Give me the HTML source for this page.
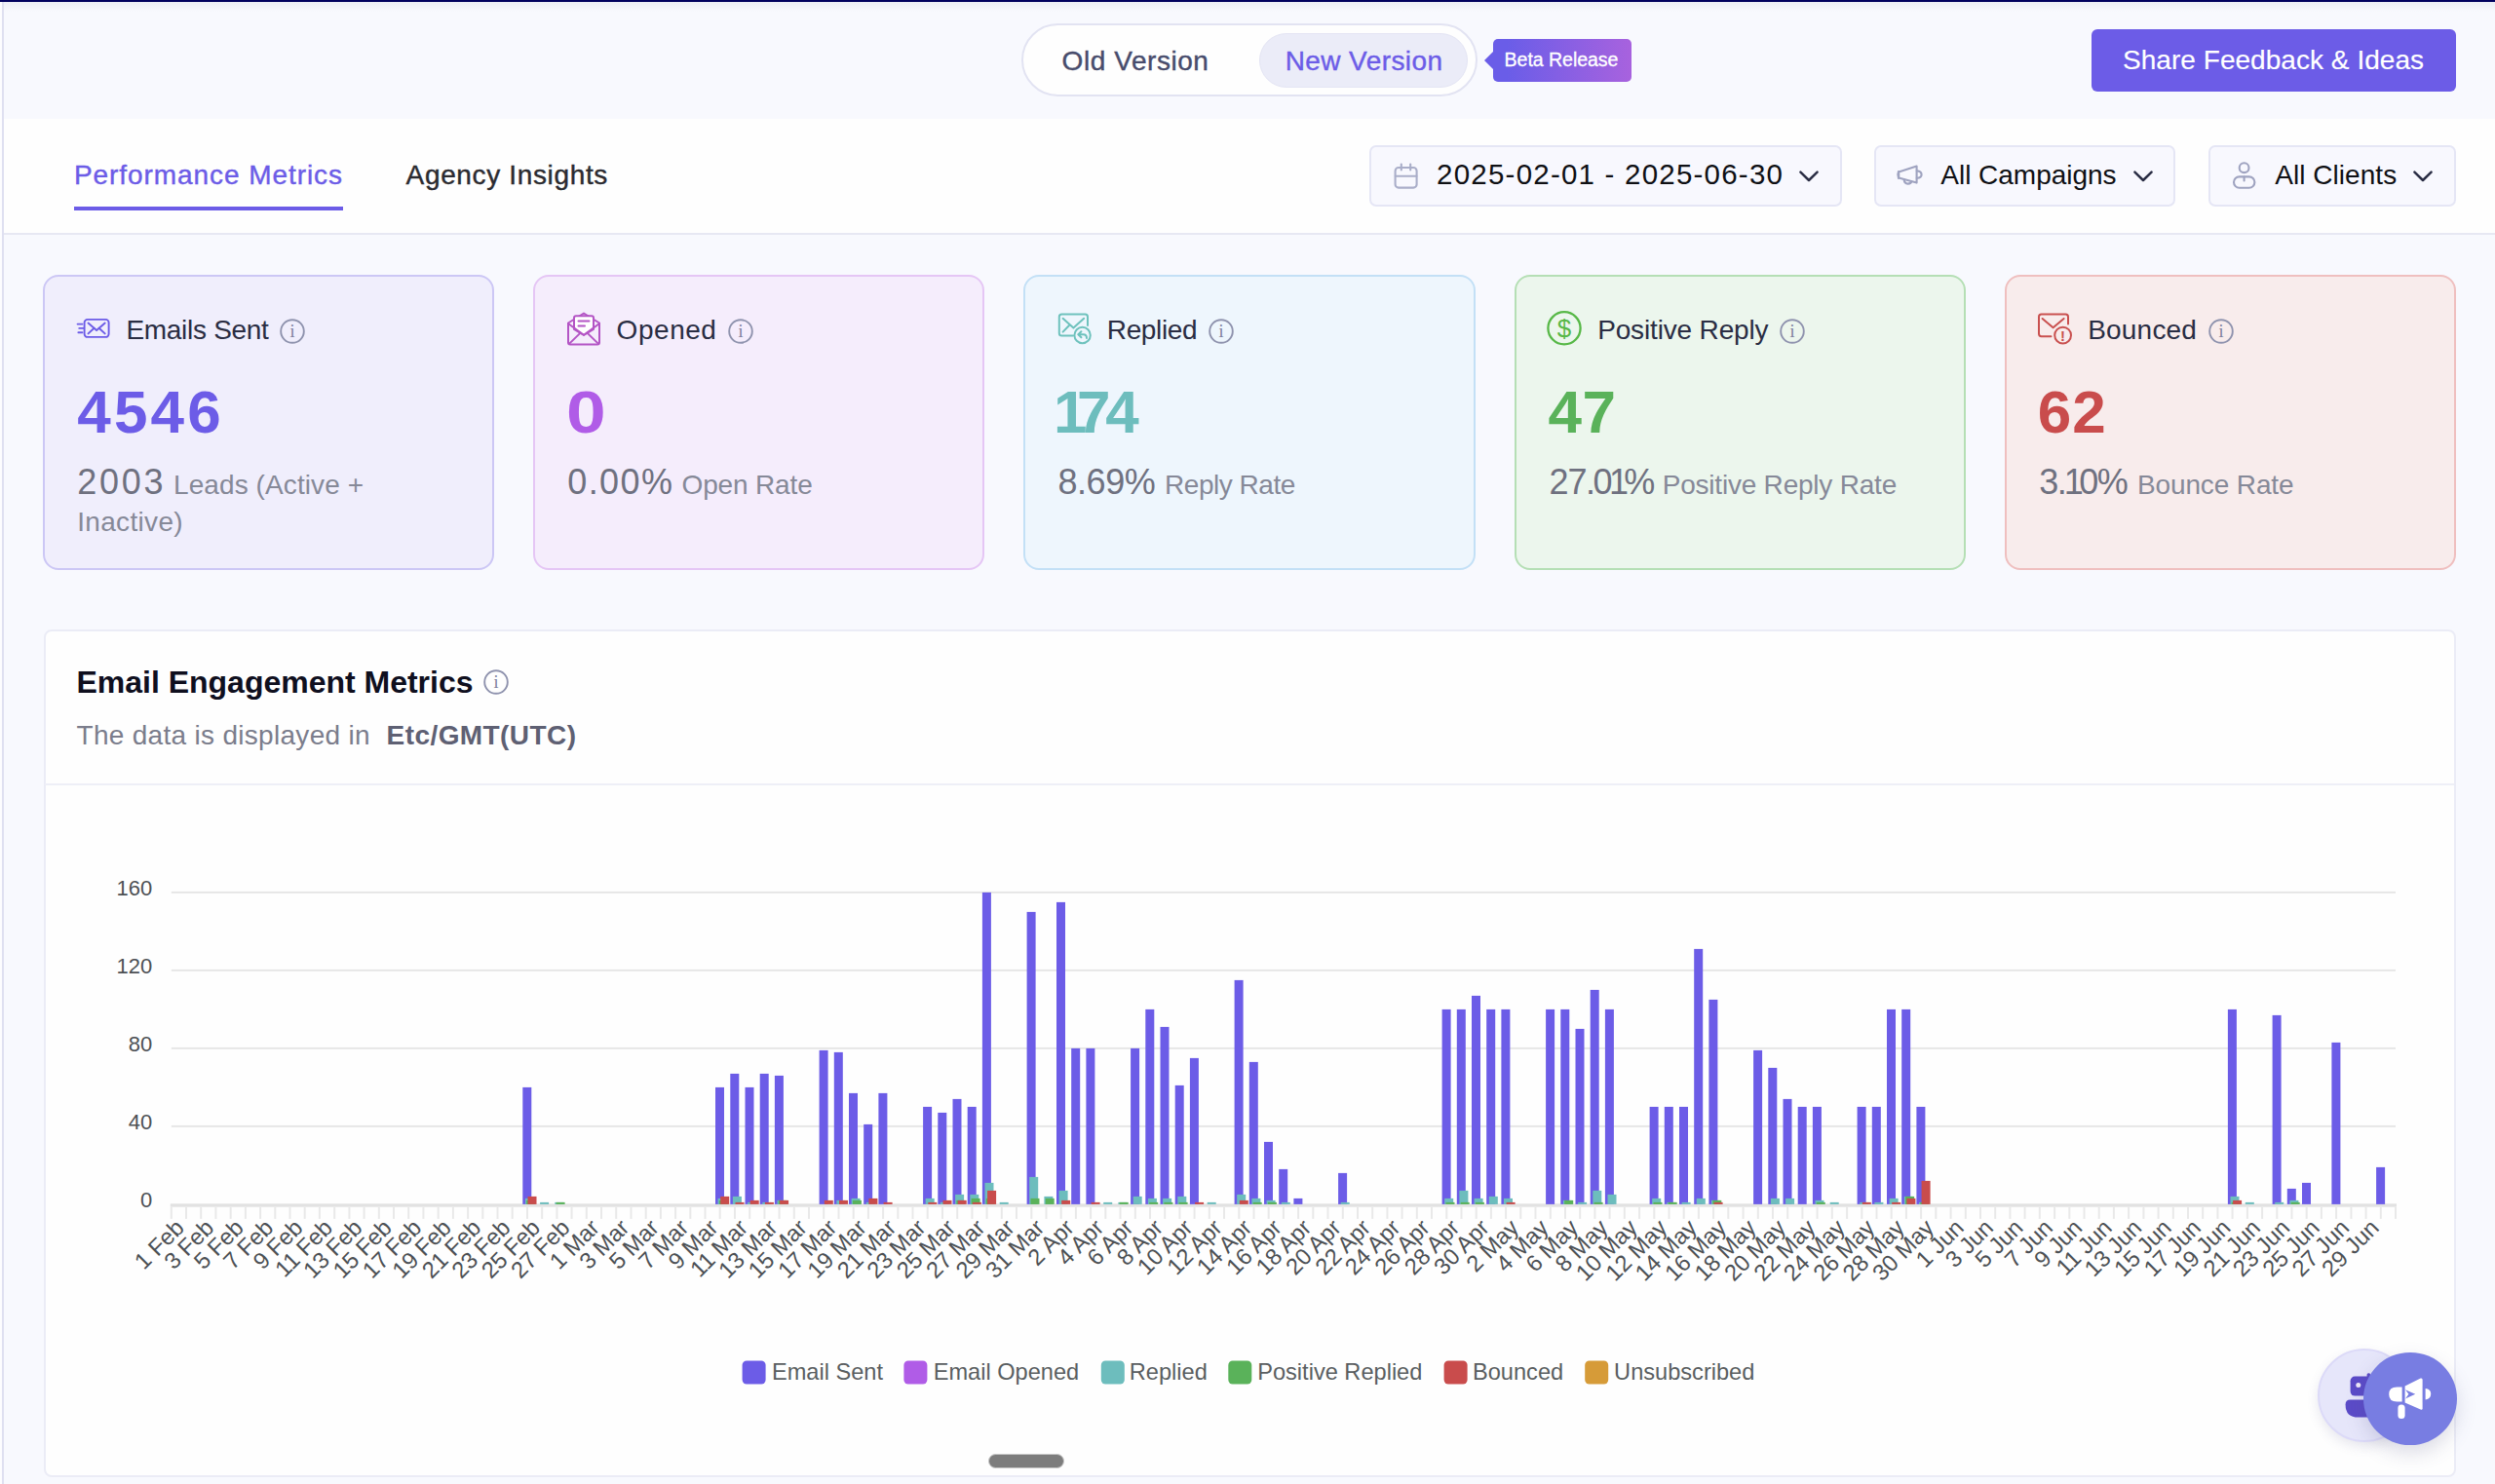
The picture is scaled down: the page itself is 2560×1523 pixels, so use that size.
<!DOCTYPE html>
<html lang="en"><head><meta charset="utf-8"><title>Performance Metrics</title>
<style>
*{box-sizing:border-box}
html,body{margin:0;padding:0}
@media (max-width:1400px){html{zoom:.5}}
body{width:2560px;height:1523px;overflow:hidden;position:relative;background:#f8f9fe;font-family:"Liberation Sans",Arial,sans-serif;color:#2a2d43}
.ab,.t,.card,.box{position:absolute}
.t{white-space:nowrap;line-height:1;display:block}
.topline{position:absolute;left:0;top:0;width:2560px;height:2.4px;background:#00005e}
.topshadow{position:absolute;left:0;top:2px;width:2560px;height:10px;background:linear-gradient(#eceef5,rgba(248,249,254,0))}
.leftedge{position:absolute;left:0;top:2px;width:2.2px;height:1521px;background:#fdfdff}
.leftline{position:absolute;left:2.2px;top:2px;width:1.9px;height:1521px;background:#dfe0f1}
.band{position:absolute;left:4.1px;top:122px;width:2556px;height:119px;background:#fefefe;border-bottom:2px solid #e7e8f3}
.pill{position:absolute;left:1048px;top:24px;width:468px;height:75px;border:2px solid #e2e3f2;border-radius:38px;background:#fefefe}
.pillin{position:absolute;left:1292px;top:33.5px;width:214px;height:56.5px;border-radius:29px;background:#ebecf8;border:1px solid #e4e5f4}
.beta{position:absolute;left:1532px;top:40px;width:142px;height:44px;border-radius:5px;background:linear-gradient(90deg,#6a5de8 10%,#a862de 100%)}
.betaarrow{position:absolute;left:1522.5px;top:52px;width:0;height:0;border-top:10.5px solid transparent;border-bottom:10.5px solid transparent;border-right:10.5px solid #6a5de8}
.share{position:absolute;left:2146px;top:30px;width:374px;height:63.5px;border-radius:6px;background:#6c5ce7}
.tabline{position:absolute;left:76px;top:212px;width:276px;height:4.2px;background:#6c5ce7}
.box{top:149px;height:63px;border:2px solid #e5e6f5;border-radius:7px;background:#f8f8fe}
.card{top:281.6px;width:463.2px;height:303.4px;border:2px solid;border-radius:16px}
.ccard{position:absolute;left:44.5px;top:646px;width:2475.5px;height:870px;background:#fefefe;border:2px solid #ebecf6;border-radius:8px}
.chead{position:absolute;left:46px;top:803.6px;width:2472px;height:2.4px;background:#eeeff7}
.chart{position:absolute;left:0;top:0}
.thumb{position:absolute;left:1013.5px;top:1492px;width:78.5px;height:14.6px;border-radius:8px;background:#7d7d7d;border:1.6px solid #c9c9c9}
.fab1{position:absolute;left:2378px;top:1384px;width:96px;height:96px;border-radius:50%;background:#e6e6fa;border:2px solid #dcdaf8;box-shadow:0 5px 12px rgba(90,90,140,.14)}
.fab2{position:absolute;left:2425px;top:1387.5px;width:95.5px;height:95.5px;border-radius:50%;background:#787de2;box-shadow:0 8px 20px rgba(80,80,130,.20)}
</style></head><body>
<div class="topshadow"></div><div class="band"></div><div class="leftedge"></div><div class="leftline"></div><div class="topline"></div>
<header>
<div class="pill"></div><div class="pillin"></div>
<span class="t" style="left:1089.6px;top:48.7px;font-size:28px;color:#484c6c;font-weight:400;letter-spacing:0.56px;-webkit-text-stroke:0.4px currentColor;">Old Version</span>
<span class="t" style="left:1318.7px;top:48.7px;font-size:28px;color:#6c5ce7;font-weight:400;letter-spacing:0.41px;-webkit-text-stroke:0.4px currentColor;">New Version</span>
<div class="betaarrow"></div><div class="beta"></div>
<span class="t" style="left:1543.6px;top:52.3px;font-size:19.6px;color:#ffffff;font-weight:400;letter-spacing:-0.07px;-webkit-text-stroke:0.3px currentColor;">Beta Release</span>
<div class="share"></div>
<span class="t" style="left:2178.0px;top:48.2px;font-size:28px;color:#ffffff;font-weight:400;letter-spacing:0.04px;-webkit-text-stroke:0.15px currentColor;">Share Feedback &amp; Ideas</span>
</header>
<nav>
<span class="t" style="left:76.0px;top:166.1px;font-size:28px;color:#6c5ce7;font-weight:400;letter-spacing:0.93px;-webkit-text-stroke:0.4px currentColor;">Performance Metrics</span>
<div class="tabline"></div>
<span class="t" style="left:416.6px;top:166.1px;font-size:28px;color:#2b2b30;font-weight:400;letter-spacing:0.65px;-webkit-text-stroke:0.4px currentColor;">Agency Insights</span>
<div class="box" style="left:1405px;width:485px"></div>
<svg class="ab" style="left:1428px;top:165px" width="30" height="32" viewBox="0 0 30 32" fill="none" stroke="#aaaec9" stroke-width="2.1" stroke-linecap="round" stroke-linejoin="round"><rect x="3.6" y="7" width="22" height="20.6" rx="3.4"/><path d="M3.8 15.8 H25.4"/><path d="M9.8 3.6 V9.4"/><path d="M19.2 3.6 V9.4"/></svg>
<span class="t" style="left:1474.1px;top:164.4px;font-size:29.5px;color:#0f1014;font-weight:400;letter-spacing:1.22px;">2025-02-01 - 2025-06-30</span>
<svg class="ab" style="left:1844.2px;top:172.6px" width="24" height="16" viewBox="0 0 24 16" fill="none" stroke="#2b2e45" stroke-width="2.5" stroke-linecap="round" stroke-linejoin="round"><path d="M3.4 3.6 L12 12 L20.6 3.6"/></svg>
<div class="box" style="left:1922.6px;width:309.8px"></div>
<svg class="ab" style="left:1944px;top:166px" width="32" height="28" viewBox="0 0 32 28" fill="none" stroke="#9fa3c0" stroke-width="2.1" stroke-linecap="round" stroke-linejoin="round"><path d="M4.2 10.4 L22.6 4.6 V21.6 L4.2 16.4 Z"/><path d="M22.8 9.4 Q27.6 9.8 27.6 13.2 Q27.6 16.4 22.8 16.8"/><path d="M9.6 18.2 Q10 22.6 13.6 22.6 Q17 22.6 17.2 20.2"/><path d="M4 10 Q2.6 13.4 4 16.8"/></svg>
<span class="t" style="left:1991.3px;top:165.5px;font-size:28px;color:#0f1014;font-weight:400;letter-spacing:-0.02px;">All Campaigns</span>
<svg class="ab" style="left:2187.4px;top:172.6px" width="24" height="16" viewBox="0 0 24 16" fill="none" stroke="#2b2e45" stroke-width="2.5" stroke-linecap="round" stroke-linejoin="round"><path d="M3.4 3.6 L12 12 L20.6 3.6"/></svg>
<div class="box" style="left:2265.6px;width:254.4px"></div>
<svg class="ab" style="left:2288px;top:164px" width="30" height="32" viewBox="0 0 30 32" fill="none" stroke="#9fa3c0" stroke-width="2.1" stroke-linecap="round" stroke-linejoin="round"><circle cx="14.6" cy="8.2" r="4.9"/><rect x="4" y="17.4" width="21.4" height="11.4" rx="5.7"/><path d="M14.6 17.6 V21.4"/></svg>
<span class="t" style="left:2334.2px;top:165.5px;font-size:28px;color:#0f1014;font-weight:400;letter-spacing:0.05px;">All Clients</span>
<svg class="ab" style="left:2474.4px;top:172.6px" width="24" height="16" viewBox="0 0 24 16" fill="none" stroke="#2b2e45" stroke-width="2.5" stroke-linecap="round" stroke-linejoin="round"><path d="M3.4 3.6 L12 12 L20.6 3.6"/></svg>
</nav>
<section>
<div class="card" style="left:44.0px;background:#f0eefc;border-color:#ccc7f5"></div>
<svg class="ab" style="left:76px;top:322px" width="40" height="30" viewBox="0 0 40 30" fill="none" stroke="#6c5ce7" stroke-width="1.9" stroke-linecap="round" stroke-linejoin="round"><rect x="10.6" y="5.9" width="25" height="18" rx="3.2"/><path d="M14.5 9.5 L23.1 17 L31.7 9.5"/><path d="M14.5 20.4 L20.6 14.8"/><path d="M31.7 20.4 L25.6 14.8"/><path d="M3.6 10.6 H8.4"/><path d="M5.3 14.9 H10"/><path d="M4.4 19.2 H8.4"/></svg>
<span class="t" style="left:129.4px;top:325.4px;font-size:28px;color:#2a2d43;font-weight:400;letter-spacing:-0.29px;">Emails Sent</span>
<svg class="ab" style="left:286.2px;top:326.0px" width="28" height="28" viewBox="0 0 28 28"><circle cx="14" cy="14" r="11.8" fill="none" stroke="#8f93ae" stroke-width="1.9"/><text x="14" y="20.2" text-anchor="middle" font-family="'Liberation Serif', serif" font-size="18" fill="#7d819c">i</text></svg>
<span class="t" style="left:79.2px;top:391.9px;font-size:62px;color:#6c5ce7;font-weight:700;letter-spacing:3.22px;">4546</span>
<span class="t" style="left:79.2px;top:477.1px;font-size:36px;color:#6f7180;font-weight:400;letter-spacing:2.77px;">2003</span>
<span class="t" style="left:178.0px;top:483.9px;font-size:28px;color:#868998;font-weight:400;letter-spacing:0.09px;">Leads (Active +</span>
<span class="t" style="left:79.2px;top:522.3px;font-size:28px;color:#868998;font-weight:400;letter-spacing:0.33px;">Inactive)</span>
<div class="card" style="left:547.2px;background:#f5edfc;border-color:#e5c6f5"></div>
<svg class="ab" style="left:578px;top:316px" width="42" height="42" viewBox="0 0 42 42" fill="none" stroke="#b455c5" stroke-width="2.0" stroke-linecap="round" stroke-linejoin="round"><path d="M5 15.5 L21 5.5 L37 15.5 V35.5 Q37 37.4 35 37.4 H7 Q5 37.4 5 35.5 Z"/><path d="M11 22 V10.2 Q11 8.2 13 8.2 H29 Q31 8.2 31 10.2 V22 L21 28 Z" fill="#fff"/><path d="M15.5 13.5 H26.5"/><path d="M15.5 18.5 H22"/><path d="M5.6 16.5 L21 27.8 L36.4 16.5"/><path d="M6.2 36.6 L17.6 25.6"/><path d="M35.8 36.6 L24.4 25.6"/></svg>
<span class="t" style="left:632.6px;top:325.4px;font-size:28px;color:#2a2d43;font-weight:400;letter-spacing:0.54px;">Opened</span>
<svg class="ab" style="left:745.8px;top:326.0px" width="28" height="28" viewBox="0 0 28 28"><circle cx="14" cy="14" r="11.8" fill="none" stroke="#8f93ae" stroke-width="1.9"/><text x="14" y="20.2" text-anchor="middle" font-family="'Liberation Serif', serif" font-size="18" fill="#7d819c">i</text></svg>
<span class="t" style="left:580.6px;top:391.9px;font-size:62px;color:#b05ce7;font-weight:700;transform:scaleX(1.18);transform-origin:0 0;">0</span>
<span class="t" style="left:582.3px;top:477.1px;font-size:36px;color:#6f7180;font-weight:400;letter-spacing:1.38px;">0.00%</span>
<span class="t" style="left:699.5px;top:483.9px;font-size:28px;color:#868998;font-weight:400;letter-spacing:-0.15px;">Open Rate</span>
<div class="card" style="left:1050.4px;background:#eef6fd;border-color:#c3e0f6"></div>
<svg class="ab" style="left:1082px;top:318px" width="44" height="40" viewBox="0 0 44 40" fill="none" stroke="#6ec2bd" stroke-width="2.0" stroke-linecap="round" stroke-linejoin="round"><path d="M19 26.6 H7.4 Q4.8 26.6 4.8 24 V7.2 Q4.8 4.6 7.4 4.6 H31.4 Q34 4.6 34 7.2 V16"/><path d="M8.6 8.8 L19.4 18.6 L30.2 8.8"/><path d="M8.6 22.6 L15 16"/><circle cx="28.6" cy="26" r="8.2" fill="#eef6fd"/><path d="M24.6 25.2 H29.6 Q33 25.2 33 29"/><path d="M27.4 22.2 L24.4 25.2 L27.4 28.2"/></svg>
<span class="t" style="left:1135.8px;top:325.4px;font-size:28px;color:#2a2d43;font-weight:400;letter-spacing:-0.37px;">Replied</span>
<svg class="ab" style="left:1239.3px;top:326.0px" width="28" height="28" viewBox="0 0 28 28"><circle cx="14" cy="14" r="11.8" fill="none" stroke="#8f93ae" stroke-width="1.9"/><text x="14" y="20.2" text-anchor="middle" font-family="'Liberation Serif', serif" font-size="18" fill="#7d819c">i</text></svg>
<span class="t" style="left:1080.9px;top:391.9px;font-size:62px;color:#6dbdbd;font-weight:700"><span style="letter-spacing:-10.5px">1</span><span style="letter-spacing:-5px">7</span>4</span>
<span class="t" style="left:1085.4px;top:477.1px;font-size:36px;color:#6f7180;font-weight:400;letter-spacing:-0.40px;">8.69%</span>
<span class="t" style="left:1195.1px;top:483.9px;font-size:28px;color:#868998;font-weight:400;letter-spacing:-0.48px;">Reply Rate</span>
<div class="card" style="left:1553.6px;background:#ecf6ed;border-color:#b5dfb5"></div>
<svg class="ab" style="left:1585px;top:317px" width="40" height="40" viewBox="0 0 40 40" fill="none" stroke="#57b847" stroke-width="2.3"><circle cx="20" cy="19.8" r="16.6"/><text x="20" y="29" text-anchor="middle" font-family="'Liberation Sans', sans-serif" font-size="26" fill="#57b847" stroke="none">$</text></svg>
<span class="t" style="left:1639.2px;top:325.4px;font-size:28px;color:#2a2d43;font-weight:400;letter-spacing:-0.16px;">Positive Reply</span>
<svg class="ab" style="left:1825.0px;top:326.0px" width="28" height="28" viewBox="0 0 28 28"><circle cx="14" cy="14" r="11.8" fill="none" stroke="#8f93ae" stroke-width="1.9"/><text x="14" y="20.2" text-anchor="middle" font-family="'Liberation Serif', serif" font-size="18" fill="#7d819c">i</text></svg>
<span class="t" style="left:1588.6px;top:391.9px;font-size:62px;color:#5ab25a;font-weight:700;letter-spacing:0.47px;">47</span>
<span class="t" style="left:1589.4px;top:477.1px;font-size:36px;color:#6f7180;font-weight:400"><span style="letter-spacing:-1px">2</span><span style="letter-spacing:-1.5px">7</span><span style="letter-spacing:-2.5px">.</span><span style="letter-spacing:-3.4px">0</span><span style="letter-spacing:-4.8px">1</span>%</span>
<span class="t" style="left:1705.7px;top:483.9px;font-size:28px;color:#868998;font-weight:400;letter-spacing:-0.21px;">Positive Reply Rate</span>
<div class="card" style="left:2056.8px;background:#f8ecec;border-color:#efbfbf"></div>
<svg class="ab" style="left:2087px;top:318px" width="44" height="40" viewBox="0 0 44 40" fill="none" stroke="#c9504f" stroke-width="2.0" stroke-linecap="round" stroke-linejoin="round"><path d="M17.5 27.2 H7.6 Q5 27.2 5 24.6 V7.2 Q5 4.6 7.6 4.6 H32.4 Q35 4.6 35 7.2 V14.4"/><path d="M8.6 9 L19.6 18.2 L30.6 9"/><circle cx="29.6" cy="26.1" r="8.4" fill="#f8ecec"/><text x="29.6" y="31.6" text-anchor="middle" font-family="'Liberation Sans', sans-serif" font-size="15" font-weight="700" fill="#c9504f" stroke="none">!</text></svg>
<span class="t" style="left:2142.2px;top:325.4px;font-size:28px;color:#2a2d43;font-weight:400;letter-spacing:0.20px;">Bounced</span>
<svg class="ab" style="left:2265.2px;top:326.0px" width="28" height="28" viewBox="0 0 28 28"><circle cx="14" cy="14" r="11.8" fill="none" stroke="#8f93ae" stroke-width="1.9"/><text x="14" y="20.2" text-anchor="middle" font-family="'Liberation Serif', serif" font-size="18" fill="#7d819c">i</text></svg>
<span class="t" style="left:2090.8px;top:391.9px;font-size:62px;color:#c94c4c;font-weight:700;letter-spacing:0.97px;">62</span>
<span class="t" style="left:2092.3px;top:477.1px;font-size:36px;color:#6f7180;font-weight:400"><span style="letter-spacing:-1.5px">3</span><span style="letter-spacing:-3px">.</span><span style="letter-spacing:-4.6px">1</span><span style="letter-spacing:-1.6px">0</span>%</span>
<span class="t" style="left:2193.0px;top:483.9px;font-size:28px;color:#868998;font-weight:400;letter-spacing:-0.13px;">Bounce Rate</span>
</section>
<section>
<div class="ccard"></div><div class="chead"></div>
<span class="t" style="left:78.5px;top:684.3px;font-size:32px;color:#0f0f1e;font-weight:700;letter-spacing:-0.01px;">Email Engagement Metrics</span>
<svg class="ab" style="left:494.7px;top:686.2px" width="28" height="28" viewBox="0 0 28 28"><circle cx="14" cy="14" r="11.8" fill="none" stroke="#8f93ae" stroke-width="1.9"/><text x="14" y="20.2" text-anchor="middle" font-family="'Liberation Serif', serif" font-size="18" fill="#7d819c">i</text></svg>
<span class="t" style="left:78.5px;top:741.1px;font-size:28px;color:#7b7d8c;font-weight:400;letter-spacing:0.30px;">The data is displayed in</span>
<span class="t" style="left:396.6px;top:741.1px;font-size:28px;color:#5e6073;font-weight:700;letter-spacing:0.42px;">Etc/GMT(UTC)</span>
<svg class="chart" width="2560" height="1523" viewBox="0 0 2560 1523" font-family="'Liberation Sans', Arial, sans-serif" font-size="22" fill="#4d5155">
<rect x="175.8" y="1154.9" width="2282.2" height="1.9" fill="#e5e5e5"/>
<rect x="175.8" y="1074.9" width="2282.2" height="1.9" fill="#e5e5e5"/>
<rect x="175.8" y="994.9" width="2282.2" height="1.9" fill="#e5e5e5"/>
<rect x="175.8" y="914.9" width="2282.2" height="1.9" fill="#e5e5e5"/>
<rect x="174.8" y="1235.3" width="2284.2" height="3.4" fill="#e2e2e2"/>
<rect x="174.8" y="1238.9" width="2" height="12" fill="#e9e9e9"/>
<rect x="190.0" y="1238.9" width="2" height="12" fill="#e9e9e9"/>
<rect x="205.2" y="1238.9" width="2" height="12" fill="#e9e9e9"/>
<rect x="220.4" y="1238.9" width="2" height="12" fill="#e9e9e9"/>
<rect x="235.7" y="1238.9" width="2" height="12" fill="#e9e9e9"/>
<rect x="250.9" y="1238.9" width="2" height="12" fill="#e9e9e9"/>
<rect x="266.1" y="1238.9" width="2" height="12" fill="#e9e9e9"/>
<rect x="281.3" y="1238.9" width="2" height="12" fill="#e9e9e9"/>
<rect x="296.5" y="1238.9" width="2" height="12" fill="#e9e9e9"/>
<rect x="311.7" y="1238.9" width="2" height="12" fill="#e9e9e9"/>
<rect x="326.9" y="1238.9" width="2" height="12" fill="#e9e9e9"/>
<rect x="342.2" y="1238.9" width="2" height="12" fill="#e9e9e9"/>
<rect x="357.4" y="1238.9" width="2" height="12" fill="#e9e9e9"/>
<rect x="372.6" y="1238.9" width="2" height="12" fill="#e9e9e9"/>
<rect x="387.8" y="1238.9" width="2" height="12" fill="#e9e9e9"/>
<rect x="403.0" y="1238.9" width="2" height="12" fill="#e9e9e9"/>
<rect x="418.2" y="1238.9" width="2" height="12" fill="#e9e9e9"/>
<rect x="433.4" y="1238.9" width="2" height="12" fill="#e9e9e9"/>
<rect x="448.7" y="1238.9" width="2" height="12" fill="#e9e9e9"/>
<rect x="463.9" y="1238.9" width="2" height="12" fill="#e9e9e9"/>
<rect x="479.1" y="1238.9" width="2" height="12" fill="#e9e9e9"/>
<rect x="494.3" y="1238.9" width="2" height="12" fill="#e9e9e9"/>
<rect x="509.5" y="1238.9" width="2" height="12" fill="#e9e9e9"/>
<rect x="524.7" y="1238.9" width="2" height="12" fill="#e9e9e9"/>
<rect x="540.0" y="1238.9" width="2" height="12" fill="#e9e9e9"/>
<rect x="555.2" y="1238.9" width="2" height="12" fill="#e9e9e9"/>
<rect x="570.4" y="1238.9" width="2" height="12" fill="#e9e9e9"/>
<rect x="585.6" y="1238.9" width="2" height="12" fill="#e9e9e9"/>
<rect x="600.8" y="1238.9" width="2" height="12" fill="#e9e9e9"/>
<rect x="616.0" y="1238.9" width="2" height="12" fill="#e9e9e9"/>
<rect x="631.2" y="1238.9" width="2" height="12" fill="#e9e9e9"/>
<rect x="646.5" y="1238.9" width="2" height="12" fill="#e9e9e9"/>
<rect x="661.7" y="1238.9" width="2" height="12" fill="#e9e9e9"/>
<rect x="676.9" y="1238.9" width="2" height="12" fill="#e9e9e9"/>
<rect x="692.1" y="1238.9" width="2" height="12" fill="#e9e9e9"/>
<rect x="707.3" y="1238.9" width="2" height="12" fill="#e9e9e9"/>
<rect x="722.5" y="1238.9" width="2" height="12" fill="#e9e9e9"/>
<rect x="737.7" y="1238.9" width="2" height="12" fill="#e9e9e9"/>
<rect x="753.0" y="1238.9" width="2" height="12" fill="#e9e9e9"/>
<rect x="768.2" y="1238.9" width="2" height="12" fill="#e9e9e9"/>
<rect x="783.4" y="1238.9" width="2" height="12" fill="#e9e9e9"/>
<rect x="798.6" y="1238.9" width="2" height="12" fill="#e9e9e9"/>
<rect x="813.8" y="1238.9" width="2" height="12" fill="#e9e9e9"/>
<rect x="829.0" y="1238.9" width="2" height="12" fill="#e9e9e9"/>
<rect x="844.2" y="1238.9" width="2" height="12" fill="#e9e9e9"/>
<rect x="859.5" y="1238.9" width="2" height="12" fill="#e9e9e9"/>
<rect x="874.7" y="1238.9" width="2" height="12" fill="#e9e9e9"/>
<rect x="889.9" y="1238.9" width="2" height="12" fill="#e9e9e9"/>
<rect x="905.1" y="1238.9" width="2" height="12" fill="#e9e9e9"/>
<rect x="920.3" y="1238.9" width="2" height="12" fill="#e9e9e9"/>
<rect x="935.5" y="1238.9" width="2" height="12" fill="#e9e9e9"/>
<rect x="950.7" y="1238.9" width="2" height="12" fill="#e9e9e9"/>
<rect x="966.0" y="1238.9" width="2" height="12" fill="#e9e9e9"/>
<rect x="981.2" y="1238.9" width="2" height="12" fill="#e9e9e9"/>
<rect x="996.4" y="1238.9" width="2" height="12" fill="#e9e9e9"/>
<rect x="1011.6" y="1238.9" width="2" height="12" fill="#e9e9e9"/>
<rect x="1026.8" y="1238.9" width="2" height="12" fill="#e9e9e9"/>
<rect x="1042.0" y="1238.9" width="2" height="12" fill="#e9e9e9"/>
<rect x="1057.3" y="1238.9" width="2" height="12" fill="#e9e9e9"/>
<rect x="1072.5" y="1238.9" width="2" height="12" fill="#e9e9e9"/>
<rect x="1087.7" y="1238.9" width="2" height="12" fill="#e9e9e9"/>
<rect x="1102.9" y="1238.9" width="2" height="12" fill="#e9e9e9"/>
<rect x="1118.1" y="1238.9" width="2" height="12" fill="#e9e9e9"/>
<rect x="1133.3" y="1238.9" width="2" height="12" fill="#e9e9e9"/>
<rect x="1148.5" y="1238.9" width="2" height="12" fill="#e9e9e9"/>
<rect x="1163.8" y="1238.9" width="2" height="12" fill="#e9e9e9"/>
<rect x="1179.0" y="1238.9" width="2" height="12" fill="#e9e9e9"/>
<rect x="1194.2" y="1238.9" width="2" height="12" fill="#e9e9e9"/>
<rect x="1209.4" y="1238.9" width="2" height="12" fill="#e9e9e9"/>
<rect x="1224.6" y="1238.9" width="2" height="12" fill="#e9e9e9"/>
<rect x="1239.8" y="1238.9" width="2" height="12" fill="#e9e9e9"/>
<rect x="1255.0" y="1238.9" width="2" height="12" fill="#e9e9e9"/>
<rect x="1270.3" y="1238.9" width="2" height="12" fill="#e9e9e9"/>
<rect x="1285.5" y="1238.9" width="2" height="12" fill="#e9e9e9"/>
<rect x="1300.7" y="1238.9" width="2" height="12" fill="#e9e9e9"/>
<rect x="1315.9" y="1238.9" width="2" height="12" fill="#e9e9e9"/>
<rect x="1331.1" y="1238.9" width="2" height="12" fill="#e9e9e9"/>
<rect x="1346.3" y="1238.9" width="2" height="12" fill="#e9e9e9"/>
<rect x="1361.5" y="1238.9" width="2" height="12" fill="#e9e9e9"/>
<rect x="1376.8" y="1238.9" width="2" height="12" fill="#e9e9e9"/>
<rect x="1392.0" y="1238.9" width="2" height="12" fill="#e9e9e9"/>
<rect x="1407.2" y="1238.9" width="2" height="12" fill="#e9e9e9"/>
<rect x="1422.4" y="1238.9" width="2" height="12" fill="#e9e9e9"/>
<rect x="1437.6" y="1238.9" width="2" height="12" fill="#e9e9e9"/>
<rect x="1452.8" y="1238.9" width="2" height="12" fill="#e9e9e9"/>
<rect x="1468.0" y="1238.9" width="2" height="12" fill="#e9e9e9"/>
<rect x="1483.3" y="1238.9" width="2" height="12" fill="#e9e9e9"/>
<rect x="1498.5" y="1238.9" width="2" height="12" fill="#e9e9e9"/>
<rect x="1513.7" y="1238.9" width="2" height="12" fill="#e9e9e9"/>
<rect x="1528.9" y="1238.9" width="2" height="12" fill="#e9e9e9"/>
<rect x="1544.1" y="1238.9" width="2" height="12" fill="#e9e9e9"/>
<rect x="1559.3" y="1238.9" width="2" height="12" fill="#e9e9e9"/>
<rect x="1574.5" y="1238.9" width="2" height="12" fill="#e9e9e9"/>
<rect x="1589.8" y="1238.9" width="2" height="12" fill="#e9e9e9"/>
<rect x="1605.0" y="1238.9" width="2" height="12" fill="#e9e9e9"/>
<rect x="1620.2" y="1238.9" width="2" height="12" fill="#e9e9e9"/>
<rect x="1635.4" y="1238.9" width="2" height="12" fill="#e9e9e9"/>
<rect x="1650.6" y="1238.9" width="2" height="12" fill="#e9e9e9"/>
<rect x="1665.8" y="1238.9" width="2" height="12" fill="#e9e9e9"/>
<rect x="1681.1" y="1238.9" width="2" height="12" fill="#e9e9e9"/>
<rect x="1696.3" y="1238.9" width="2" height="12" fill="#e9e9e9"/>
<rect x="1711.5" y="1238.9" width="2" height="12" fill="#e9e9e9"/>
<rect x="1726.7" y="1238.9" width="2" height="12" fill="#e9e9e9"/>
<rect x="1741.9" y="1238.9" width="2" height="12" fill="#e9e9e9"/>
<rect x="1757.1" y="1238.9" width="2" height="12" fill="#e9e9e9"/>
<rect x="1772.3" y="1238.9" width="2" height="12" fill="#e9e9e9"/>
<rect x="1787.6" y="1238.9" width="2" height="12" fill="#e9e9e9"/>
<rect x="1802.8" y="1238.9" width="2" height="12" fill="#e9e9e9"/>
<rect x="1818.0" y="1238.9" width="2" height="12" fill="#e9e9e9"/>
<rect x="1833.2" y="1238.9" width="2" height="12" fill="#e9e9e9"/>
<rect x="1848.4" y="1238.9" width="2" height="12" fill="#e9e9e9"/>
<rect x="1863.6" y="1238.9" width="2" height="12" fill="#e9e9e9"/>
<rect x="1878.8" y="1238.9" width="2" height="12" fill="#e9e9e9"/>
<rect x="1894.1" y="1238.9" width="2" height="12" fill="#e9e9e9"/>
<rect x="1909.3" y="1238.9" width="2" height="12" fill="#e9e9e9"/>
<rect x="1924.5" y="1238.9" width="2" height="12" fill="#e9e9e9"/>
<rect x="1939.7" y="1238.9" width="2" height="12" fill="#e9e9e9"/>
<rect x="1954.9" y="1238.9" width="2" height="12" fill="#e9e9e9"/>
<rect x="1970.1" y="1238.9" width="2" height="12" fill="#e9e9e9"/>
<rect x="1985.3" y="1238.9" width="2" height="12" fill="#e9e9e9"/>
<rect x="2000.6" y="1238.9" width="2" height="12" fill="#e9e9e9"/>
<rect x="2015.8" y="1238.9" width="2" height="12" fill="#e9e9e9"/>
<rect x="2031.0" y="1238.9" width="2" height="12" fill="#e9e9e9"/>
<rect x="2046.2" y="1238.9" width="2" height="12" fill="#e9e9e9"/>
<rect x="2061.4" y="1238.9" width="2" height="12" fill="#e9e9e9"/>
<rect x="2076.6" y="1238.9" width="2" height="12" fill="#e9e9e9"/>
<rect x="2091.8" y="1238.9" width="2" height="12" fill="#e9e9e9"/>
<rect x="2107.1" y="1238.9" width="2" height="12" fill="#e9e9e9"/>
<rect x="2122.3" y="1238.9" width="2" height="12" fill="#e9e9e9"/>
<rect x="2137.5" y="1238.9" width="2" height="12" fill="#e9e9e9"/>
<rect x="2152.7" y="1238.9" width="2" height="12" fill="#e9e9e9"/>
<rect x="2167.9" y="1238.9" width="2" height="12" fill="#e9e9e9"/>
<rect x="2183.1" y="1238.9" width="2" height="12" fill="#e9e9e9"/>
<rect x="2198.4" y="1238.9" width="2" height="12" fill="#e9e9e9"/>
<rect x="2213.6" y="1238.9" width="2" height="12" fill="#e9e9e9"/>
<rect x="2228.8" y="1238.9" width="2" height="12" fill="#e9e9e9"/>
<rect x="2244.0" y="1238.9" width="2" height="12" fill="#e9e9e9"/>
<rect x="2259.2" y="1238.9" width="2" height="12" fill="#e9e9e9"/>
<rect x="2274.4" y="1238.9" width="2" height="12" fill="#e9e9e9"/>
<rect x="2289.6" y="1238.9" width="2" height="12" fill="#e9e9e9"/>
<rect x="2304.9" y="1238.9" width="2" height="12" fill="#e9e9e9"/>
<rect x="2320.1" y="1238.9" width="2" height="12" fill="#e9e9e9"/>
<rect x="2335.3" y="1238.9" width="2" height="12" fill="#e9e9e9"/>
<rect x="2350.5" y="1238.9" width="2" height="12" fill="#e9e9e9"/>
<rect x="2365.7" y="1238.9" width="2" height="12" fill="#e9e9e9"/>
<rect x="2380.9" y="1238.9" width="2" height="12" fill="#e9e9e9"/>
<rect x="2396.1" y="1238.9" width="2" height="12" fill="#e9e9e9"/>
<rect x="2411.4" y="1238.9" width="2" height="12" fill="#e9e9e9"/>
<rect x="2426.6" y="1238.9" width="2" height="12" fill="#e9e9e9"/>
<rect x="2441.8" y="1238.9" width="2" height="12" fill="#e9e9e9"/>
<rect x="2457.0" y="1238.9" width="2" height="12" fill="#e9e9e9"/>
<text x="156.2" y="1239.1" text-anchor="end">0</text>
<text x="156.2" y="1159.1" text-anchor="end">40</text>
<text x="156.2" y="1079.1" text-anchor="end">80</text>
<text x="156.2" y="999.1" text-anchor="end">120</text>
<text x="156.2" y="919.1" text-anchor="end">160</text>
<g fill="#6c5ce7">
<rect x="536.3" y="1115.9" width="9.0" height="120.0"/>
<rect x="734.0" y="1115.9" width="9.0" height="120.0"/>
<rect x="749.3" y="1101.9" width="9.0" height="134.0"/>
<rect x="764.5" y="1115.9" width="9.0" height="120.0"/>
<rect x="779.7" y="1101.9" width="9.0" height="134.0"/>
<rect x="794.9" y="1103.9" width="9.0" height="132.0"/>
<rect x="840.6" y="1077.9" width="9.0" height="158.0"/>
<rect x="855.8" y="1079.9" width="9.0" height="156.0"/>
<rect x="871.0" y="1121.9" width="9.0" height="114.0"/>
<rect x="886.2" y="1153.9" width="9.0" height="82.0"/>
<rect x="901.4" y="1121.9" width="9.0" height="114.0"/>
<rect x="947.1" y="1135.9" width="9.0" height="100.0"/>
<rect x="962.3" y="1141.9" width="9.0" height="94.0"/>
<rect x="977.5" y="1127.9" width="9.0" height="108.0"/>
<rect x="992.7" y="1135.9" width="9.0" height="100.0"/>
<rect x="1007.9" y="915.9" width="9.0" height="320.0"/>
<rect x="1053.6" y="935.9" width="9.0" height="300.0"/>
<rect x="1084.0" y="925.9" width="9.0" height="310.0"/>
<rect x="1099.2" y="1075.9" width="9.0" height="160.0"/>
<rect x="1114.4" y="1075.9" width="9.0" height="160.0"/>
<rect x="1160.1" y="1075.9" width="9.0" height="160.0"/>
<rect x="1175.3" y="1035.9" width="9.0" height="200.0"/>
<rect x="1190.5" y="1053.9" width="9.0" height="182.0"/>
<rect x="1205.7" y="1113.9" width="9.0" height="122.0"/>
<rect x="1220.9" y="1085.9" width="9.0" height="150.0"/>
<rect x="1266.6" y="1005.9" width="9.0" height="230.0"/>
<rect x="1281.8" y="1089.9" width="9.0" height="146.0"/>
<rect x="1297.0" y="1171.9" width="9.0" height="64.0"/>
<rect x="1312.2" y="1199.9" width="9.0" height="36.0"/>
<rect x="1327.4" y="1229.9" width="9.0" height="6.0"/>
<rect x="1373.1" y="1203.9" width="9.0" height="32.0"/>
<rect x="1479.6" y="1035.9" width="9.0" height="200.0"/>
<rect x="1494.8" y="1035.9" width="9.0" height="200.0"/>
<rect x="1510.0" y="1021.9" width="9.0" height="214.0"/>
<rect x="1525.2" y="1035.9" width="9.0" height="200.0"/>
<rect x="1540.4" y="1035.9" width="9.0" height="200.0"/>
<rect x="1586.1" y="1035.9" width="9.0" height="200.0"/>
<rect x="1601.3" y="1035.9" width="9.0" height="200.0"/>
<rect x="1616.5" y="1055.9" width="9.0" height="180.0"/>
<rect x="1631.7" y="1015.9" width="9.0" height="220.0"/>
<rect x="1646.9" y="1035.9" width="9.0" height="200.0"/>
<rect x="1692.6" y="1135.9" width="9.0" height="100.0"/>
<rect x="1707.8" y="1135.9" width="9.0" height="100.0"/>
<rect x="1723.0" y="1135.9" width="9.0" height="100.0"/>
<rect x="1738.2" y="973.9" width="9.0" height="262.0"/>
<rect x="1753.4" y="1025.9" width="9.0" height="210.0"/>
<rect x="1799.1" y="1077.9" width="9.0" height="158.0"/>
<rect x="1814.3" y="1095.9" width="9.0" height="140.0"/>
<rect x="1829.5" y="1127.9" width="9.0" height="108.0"/>
<rect x="1844.7" y="1135.9" width="9.0" height="100.0"/>
<rect x="1859.9" y="1135.9" width="9.0" height="100.0"/>
<rect x="1905.6" y="1135.9" width="9.0" height="100.0"/>
<rect x="1920.8" y="1135.9" width="9.0" height="100.0"/>
<rect x="1936.0" y="1035.9" width="9.0" height="200.0"/>
<rect x="1951.2" y="1035.9" width="9.0" height="200.0"/>
<rect x="1966.4" y="1135.9" width="9.0" height="100.0"/>
<rect x="2285.9" y="1035.9" width="9.0" height="200.0"/>
<rect x="2331.6" y="1041.9" width="9.0" height="194.0"/>
<rect x="2346.8" y="1219.9" width="9.0" height="16.0"/>
<rect x="2362.0" y="1213.9" width="9.0" height="22.0"/>
<rect x="2392.4" y="1069.9" width="9.0" height="166.0"/>
<rect x="2438.1" y="1197.9" width="9.0" height="38.0"/>
</g>
<g fill="#6dbdbd">
<rect x="538.9" y="1229.9" width="9.0" height="6.0"/>
<rect x="554.1" y="1233.9" width="9.0" height="2.0"/>
<rect x="569.3" y="1233.9" width="9.0" height="2.0"/>
<rect x="736.6" y="1229.9" width="9.0" height="6.0"/>
<rect x="751.9" y="1227.9" width="9.0" height="8.0"/>
<rect x="767.1" y="1233.9" width="9.0" height="2.0"/>
<rect x="782.3" y="1233.9" width="9.0" height="2.0"/>
<rect x="797.5" y="1231.9" width="9.0" height="4.0"/>
<rect x="858.4" y="1231.9" width="9.0" height="4.0"/>
<rect x="873.6" y="1229.9" width="9.0" height="6.0"/>
<rect x="888.8" y="1233.9" width="9.0" height="2.0"/>
<rect x="949.7" y="1229.9" width="9.0" height="6.0"/>
<rect x="964.9" y="1233.9" width="9.0" height="2.0"/>
<rect x="980.1" y="1225.9" width="9.0" height="10.0"/>
<rect x="995.3" y="1225.9" width="9.0" height="10.0"/>
<rect x="1010.5" y="1213.9" width="9.0" height="22.0"/>
<rect x="1025.7" y="1233.9" width="9.0" height="2.0"/>
<rect x="1056.2" y="1207.9" width="9.0" height="28.0"/>
<rect x="1071.4" y="1227.9" width="9.0" height="8.0"/>
<rect x="1086.6" y="1221.9" width="9.0" height="14.0"/>
<rect x="1132.2" y="1233.9" width="9.0" height="2.0"/>
<rect x="1147.4" y="1233.9" width="9.0" height="2.0"/>
<rect x="1162.7" y="1227.9" width="9.0" height="8.0"/>
<rect x="1177.9" y="1229.9" width="9.0" height="6.0"/>
<rect x="1193.1" y="1229.9" width="9.0" height="6.0"/>
<rect x="1208.3" y="1227.9" width="9.0" height="8.0"/>
<rect x="1238.7" y="1233.9" width="9.0" height="2.0"/>
<rect x="1269.2" y="1225.9" width="9.0" height="10.0"/>
<rect x="1284.4" y="1229.9" width="9.0" height="6.0"/>
<rect x="1299.6" y="1231.9" width="9.0" height="4.0"/>
<rect x="1314.8" y="1233.9" width="9.0" height="2.0"/>
<rect x="1375.7" y="1233.9" width="9.0" height="2.0"/>
<rect x="1482.2" y="1229.9" width="9.0" height="6.0"/>
<rect x="1497.4" y="1221.9" width="9.0" height="14.0"/>
<rect x="1512.6" y="1229.9" width="9.0" height="6.0"/>
<rect x="1527.8" y="1227.9" width="9.0" height="8.0"/>
<rect x="1543.0" y="1229.9" width="9.0" height="6.0"/>
<rect x="1603.9" y="1231.9" width="9.0" height="4.0"/>
<rect x="1619.1" y="1233.9" width="9.0" height="2.0"/>
<rect x="1634.3" y="1221.9" width="9.0" height="14.0"/>
<rect x="1649.5" y="1225.9" width="9.0" height="10.0"/>
<rect x="1695.2" y="1229.9" width="9.0" height="6.0"/>
<rect x="1710.4" y="1233.9" width="9.0" height="2.0"/>
<rect x="1725.6" y="1233.9" width="9.0" height="2.0"/>
<rect x="1740.8" y="1229.9" width="9.0" height="6.0"/>
<rect x="1756.0" y="1231.9" width="9.0" height="4.0"/>
<rect x="1816.9" y="1229.9" width="9.0" height="6.0"/>
<rect x="1832.1" y="1229.9" width="9.0" height="6.0"/>
<rect x="1862.5" y="1231.9" width="9.0" height="4.0"/>
<rect x="1877.7" y="1233.9" width="9.0" height="2.0"/>
<rect x="1908.2" y="1233.9" width="9.0" height="2.0"/>
<rect x="1923.4" y="1233.9" width="9.0" height="2.0"/>
<rect x="1938.6" y="1229.9" width="9.0" height="6.0"/>
<rect x="1953.8" y="1227.9" width="9.0" height="8.0"/>
<rect x="1969.0" y="1233.9" width="9.0" height="2.0"/>
<rect x="2288.5" y="1227.9" width="9.0" height="8.0"/>
<rect x="2303.8" y="1233.9" width="9.0" height="2.0"/>
<rect x="2334.2" y="1233.9" width="9.0" height="2.0"/>
<rect x="2349.4" y="1231.9" width="9.0" height="4.0"/>
</g>
<g fill="#5ab25a">
<rect x="540.2" y="1231.9" width="9.0" height="4.0"/>
<rect x="570.6" y="1233.9" width="9.0" height="2.0"/>
<rect x="737.9" y="1231.9" width="9.0" height="4.0"/>
<rect x="798.8" y="1231.9" width="9.0" height="4.0"/>
<rect x="874.9" y="1231.9" width="9.0" height="4.0"/>
<rect x="981.4" y="1231.9" width="9.0" height="4.0"/>
<rect x="996.6" y="1229.9" width="9.0" height="6.0"/>
<rect x="1011.8" y="1229.9" width="9.0" height="6.0"/>
<rect x="1057.5" y="1229.9" width="9.0" height="6.0"/>
<rect x="1072.7" y="1229.9" width="9.0" height="6.0"/>
<rect x="1148.7" y="1233.9" width="9.0" height="2.0"/>
<rect x="1179.2" y="1233.9" width="9.0" height="2.0"/>
<rect x="1194.4" y="1233.9" width="9.0" height="2.0"/>
<rect x="1209.6" y="1233.9" width="9.0" height="2.0"/>
<rect x="1285.7" y="1233.9" width="9.0" height="2.0"/>
<rect x="1300.9" y="1233.9" width="9.0" height="2.0"/>
<rect x="1483.5" y="1233.9" width="9.0" height="2.0"/>
<rect x="1498.7" y="1233.9" width="9.0" height="2.0"/>
<rect x="1513.9" y="1233.9" width="9.0" height="2.0"/>
<rect x="1605.2" y="1231.9" width="9.0" height="4.0"/>
<rect x="1635.6" y="1233.9" width="9.0" height="2.0"/>
<rect x="1696.5" y="1233.9" width="9.0" height="2.0"/>
<rect x="1711.7" y="1233.9" width="9.0" height="2.0"/>
<rect x="1757.3" y="1231.9" width="9.0" height="4.0"/>
<rect x="1863.8" y="1233.9" width="9.0" height="2.0"/>
<rect x="1955.1" y="1227.9" width="9.0" height="8.0"/>
<rect x="1970.3" y="1233.9" width="9.0" height="2.0"/>
<rect x="2289.8" y="1233.9" width="9.0" height="2.0"/>
<rect x="2350.7" y="1233.9" width="9.0" height="2.0"/>
</g>
<g fill="#c94c4c">
<rect x="541.5" y="1227.9" width="9.0" height="8.0"/>
<rect x="739.2" y="1227.9" width="9.0" height="8.0"/>
<rect x="754.5" y="1233.9" width="9.0" height="2.0"/>
<rect x="769.7" y="1231.9" width="9.0" height="4.0"/>
<rect x="784.9" y="1233.9" width="9.0" height="2.0"/>
<rect x="800.1" y="1231.9" width="9.0" height="4.0"/>
<rect x="845.8" y="1231.9" width="9.0" height="4.0"/>
<rect x="861.0" y="1231.9" width="9.0" height="4.0"/>
<rect x="891.4" y="1229.9" width="9.0" height="6.0"/>
<rect x="906.6" y="1233.9" width="9.0" height="2.0"/>
<rect x="952.3" y="1233.9" width="9.0" height="2.0"/>
<rect x="967.5" y="1231.9" width="9.0" height="4.0"/>
<rect x="982.7" y="1231.9" width="9.0" height="4.0"/>
<rect x="997.9" y="1233.9" width="9.0" height="2.0"/>
<rect x="1013.1" y="1221.9" width="9.0" height="14.0"/>
<rect x="1089.2" y="1231.9" width="9.0" height="4.0"/>
<rect x="1119.6" y="1233.9" width="9.0" height="2.0"/>
<rect x="1226.1" y="1233.9" width="9.0" height="2.0"/>
<rect x="1271.8" y="1231.9" width="9.0" height="4.0"/>
<rect x="1545.6" y="1233.9" width="9.0" height="2.0"/>
<rect x="1758.6" y="1233.9" width="9.0" height="2.0"/>
<rect x="1910.8" y="1233.9" width="9.0" height="2.0"/>
<rect x="1941.2" y="1233.9" width="9.0" height="2.0"/>
<rect x="1956.4" y="1229.9" width="9.0" height="6.0"/>
<rect x="1971.6" y="1211.9" width="9.0" height="24.0"/>
<rect x="2291.1" y="1231.9" width="9.0" height="4.0"/>
</g>
<text transform="translate(190.4 1261.4) rotate(-45)" text-anchor="end" font-size="23.6">1 Feb</text>
<text transform="translate(220.8 1261.4) rotate(-45)" text-anchor="end" font-size="23.6">3 Feb</text>
<text transform="translate(251.3 1261.4) rotate(-45)" text-anchor="end" font-size="23.6">5 Feb</text>
<text transform="translate(281.7 1261.4) rotate(-45)" text-anchor="end" font-size="23.6">7 Feb</text>
<text transform="translate(312.1 1261.4) rotate(-45)" text-anchor="end" font-size="23.6">9 Feb</text>
<text transform="translate(342.6 1261.4) rotate(-45)" text-anchor="end" font-size="23.6">11 Feb</text>
<text transform="translate(373.0 1261.4) rotate(-45)" text-anchor="end" font-size="23.6">13 Feb</text>
<text transform="translate(403.4 1261.4) rotate(-45)" text-anchor="end" font-size="23.6">15 Feb</text>
<text transform="translate(433.8 1261.4) rotate(-45)" text-anchor="end" font-size="23.6">17 Feb</text>
<text transform="translate(464.3 1261.4) rotate(-45)" text-anchor="end" font-size="23.6">19 Feb</text>
<text transform="translate(494.7 1261.4) rotate(-45)" text-anchor="end" font-size="23.6">21 Feb</text>
<text transform="translate(525.1 1261.4) rotate(-45)" text-anchor="end" font-size="23.6">23 Feb</text>
<text transform="translate(555.6 1261.4) rotate(-45)" text-anchor="end" font-size="23.6">25 Feb</text>
<text transform="translate(586.0 1261.4) rotate(-45)" text-anchor="end" font-size="23.6">27 Feb</text>
<text transform="translate(616.4 1261.4) rotate(-45)" text-anchor="end" font-size="23.6">1 Mar</text>
<text transform="translate(646.8 1261.4) rotate(-45)" text-anchor="end" font-size="23.6">3 Mar</text>
<text transform="translate(677.3 1261.4) rotate(-45)" text-anchor="end" font-size="23.6">5 Mar</text>
<text transform="translate(707.7 1261.4) rotate(-45)" text-anchor="end" font-size="23.6">7 Mar</text>
<text transform="translate(738.1 1261.4) rotate(-45)" text-anchor="end" font-size="23.6">9 Mar</text>
<text transform="translate(768.6 1261.4) rotate(-45)" text-anchor="end" font-size="23.6">11 Mar</text>
<text transform="translate(799.0 1261.4) rotate(-45)" text-anchor="end" font-size="23.6">13 Mar</text>
<text transform="translate(829.4 1261.4) rotate(-45)" text-anchor="end" font-size="23.6">15 Mar</text>
<text transform="translate(859.9 1261.4) rotate(-45)" text-anchor="end" font-size="23.6">17 Mar</text>
<text transform="translate(890.3 1261.4) rotate(-45)" text-anchor="end" font-size="23.6">19 Mar</text>
<text transform="translate(920.7 1261.4) rotate(-45)" text-anchor="end" font-size="23.6">21 Mar</text>
<text transform="translate(951.1 1261.4) rotate(-45)" text-anchor="end" font-size="23.6">23 Mar</text>
<text transform="translate(981.6 1261.4) rotate(-45)" text-anchor="end" font-size="23.6">25 Mar</text>
<text transform="translate(1012.0 1261.4) rotate(-45)" text-anchor="end" font-size="23.6">27 Mar</text>
<text transform="translate(1042.4 1261.4) rotate(-45)" text-anchor="end" font-size="23.6">29 Mar</text>
<text transform="translate(1072.9 1261.4) rotate(-45)" text-anchor="end" font-size="23.6">31 Mar</text>
<text transform="translate(1103.3 1261.4) rotate(-45)" text-anchor="end" font-size="23.6">2 Apr</text>
<text transform="translate(1133.7 1261.4) rotate(-45)" text-anchor="end" font-size="23.6">4 Apr</text>
<text transform="translate(1164.1 1261.4) rotate(-45)" text-anchor="end" font-size="23.6">6 Apr</text>
<text transform="translate(1194.6 1261.4) rotate(-45)" text-anchor="end" font-size="23.6">8 Apr</text>
<text transform="translate(1225.0 1261.4) rotate(-45)" text-anchor="end" font-size="23.6">10 Apr</text>
<text transform="translate(1255.4 1261.4) rotate(-45)" text-anchor="end" font-size="23.6">12 Apr</text>
<text transform="translate(1285.9 1261.4) rotate(-45)" text-anchor="end" font-size="23.6">14 Apr</text>
<text transform="translate(1316.3 1261.4) rotate(-45)" text-anchor="end" font-size="23.6">16 Apr</text>
<text transform="translate(1346.7 1261.4) rotate(-45)" text-anchor="end" font-size="23.6">18 Apr</text>
<text transform="translate(1377.2 1261.4) rotate(-45)" text-anchor="end" font-size="23.6">20 Apr</text>
<text transform="translate(1407.6 1261.4) rotate(-45)" text-anchor="end" font-size="23.6">22 Apr</text>
<text transform="translate(1438.0 1261.4) rotate(-45)" text-anchor="end" font-size="23.6">24 Apr</text>
<text transform="translate(1468.4 1261.4) rotate(-45)" text-anchor="end" font-size="23.6">26 Apr</text>
<text transform="translate(1498.9 1261.4) rotate(-45)" text-anchor="end" font-size="23.6">28 Apr</text>
<text transform="translate(1529.3 1261.4) rotate(-45)" text-anchor="end" font-size="23.6">30 Apr</text>
<text transform="translate(1559.7 1261.4) rotate(-45)" text-anchor="end" font-size="23.6">2 May</text>
<text transform="translate(1590.2 1261.4) rotate(-45)" text-anchor="end" font-size="23.6">4 May</text>
<text transform="translate(1620.6 1261.4) rotate(-45)" text-anchor="end" font-size="23.6">6 May</text>
<text transform="translate(1651.0 1261.4) rotate(-45)" text-anchor="end" font-size="23.6">8 May</text>
<text transform="translate(1681.4 1261.4) rotate(-45)" text-anchor="end" font-size="23.6">10 May</text>
<text transform="translate(1711.9 1261.4) rotate(-45)" text-anchor="end" font-size="23.6">12 May</text>
<text transform="translate(1742.3 1261.4) rotate(-45)" text-anchor="end" font-size="23.6">14 May</text>
<text transform="translate(1772.7 1261.4) rotate(-45)" text-anchor="end" font-size="23.6">16 May</text>
<text transform="translate(1803.2 1261.4) rotate(-45)" text-anchor="end" font-size="23.6">18 May</text>
<text transform="translate(1833.6 1261.4) rotate(-45)" text-anchor="end" font-size="23.6">20 May</text>
<text transform="translate(1864.0 1261.4) rotate(-45)" text-anchor="end" font-size="23.6">22 May</text>
<text transform="translate(1894.4 1261.4) rotate(-45)" text-anchor="end" font-size="23.6">24 May</text>
<text transform="translate(1924.9 1261.4) rotate(-45)" text-anchor="end" font-size="23.6">26 May</text>
<text transform="translate(1955.3 1261.4) rotate(-45)" text-anchor="end" font-size="23.6">28 May</text>
<text transform="translate(1985.7 1261.4) rotate(-45)" text-anchor="end" font-size="23.6">30 May</text>
<text transform="translate(2016.2 1261.4) rotate(-45)" text-anchor="end" font-size="23.6">1 Jun</text>
<text transform="translate(2046.6 1261.4) rotate(-45)" text-anchor="end" font-size="23.6">3 Jun</text>
<text transform="translate(2077.0 1261.4) rotate(-45)" text-anchor="end" font-size="23.6">5 Jun</text>
<text transform="translate(2107.5 1261.4) rotate(-45)" text-anchor="end" font-size="23.6">7 Jun</text>
<text transform="translate(2137.9 1261.4) rotate(-45)" text-anchor="end" font-size="23.6">9 Jun</text>
<text transform="translate(2168.3 1261.4) rotate(-45)" text-anchor="end" font-size="23.6">11 Jun</text>
<text transform="translate(2198.7 1261.4) rotate(-45)" text-anchor="end" font-size="23.6">13 Jun</text>
<text transform="translate(2229.2 1261.4) rotate(-45)" text-anchor="end" font-size="23.6">15 Jun</text>
<text transform="translate(2259.6 1261.4) rotate(-45)" text-anchor="end" font-size="23.6">17 Jun</text>
<text transform="translate(2290.0 1261.4) rotate(-45)" text-anchor="end" font-size="23.6">19 Jun</text>
<text transform="translate(2320.5 1261.4) rotate(-45)" text-anchor="end" font-size="23.6">21 Jun</text>
<text transform="translate(2350.9 1261.4) rotate(-45)" text-anchor="end" font-size="23.6">23 Jun</text>
<text transform="translate(2381.3 1261.4) rotate(-45)" text-anchor="end" font-size="23.6">25 Jun</text>
<text transform="translate(2411.7 1261.4) rotate(-45)" text-anchor="end" font-size="23.6">27 Jun</text>
<text transform="translate(2442.2 1261.4) rotate(-45)" text-anchor="end" font-size="23.6">29 Jun</text>
<rect x="761.6" y="1396.5" width="24" height="24" rx="4.5" fill="#6c5ce7"/>
<text x="791.9" y="1416.3" font-size="23.6" fill="#5a5e61">Email Sent</text>
<rect x="927.4" y="1396.5" width="24" height="24" rx="4.5" fill="#b05ce7"/>
<text x="957.7" y="1416.3" font-size="23.6" fill="#5a5e61">Email Opened</text>
<rect x="1129.8" y="1396.5" width="24" height="24" rx="4.5" fill="#6dbdbd"/>
<text x="1158.8" y="1416.3" font-size="23.6" fill="#5a5e61">Replied</text>
<rect x="1260.3" y="1396.5" width="24" height="24" rx="4.5" fill="#5ab25a"/>
<text x="1290.2" y="1416.3" font-size="23.6" fill="#5a5e61">Positive Replied</text>
<rect x="1481.6" y="1396.5" width="24" height="24" rx="4.5" fill="#c94c4c"/>
<text x="1511.0" y="1416.3" font-size="23.6" fill="#5a5e61">Bounced</text>
<rect x="1626.2" y="1396.5" width="24" height="24" rx="4.5" fill="#d69b38"/>
<text x="1656.1" y="1416.3" font-size="23.6" fill="#5a5e61">Unsubscribed</text>
</svg>
<div class="thumb"></div>
</section>
<div class="fab1"></div>
<svg class="ab" style="left:2400px;top:1405px" width="60" height="56" viewBox="0 0 60 56"><g fill="#5b4bc8"><rect x="28.6" y="4.2" width="3.6" height="6" rx="1.6"/><rect x="11.6" y="7.6" width="38" height="20" rx="4.6"/><path d="M6.6 36.4 Q6.6 31.6 11.4 31.6 H48.6 Q53.4 31.6 53.4 36.4 Q53.4 49.6 40.2 49.6 H19.8 Q6.6 49.6 6.6 36.4 Z"/></g><circle cx="19.8" cy="16.6" r="2.5" fill="#eee9f8"/></svg>
<div class="fab2"></div>
<svg class="ab" style="left:2448px;top:1410px" width="50" height="50" viewBox="0 0 50 50"><g fill="#ffffff"><path d="M19.6 12.4 L35.6 4.6 Q37.6 3.8 37.6 6 V35.2 Q37.6 37.4 35.6 36.6 L19.6 29.6 Z"/><path d="M16.6 13.6 V28.4 H11.4 Q3.2 28.4 3.2 21 Q3.2 13.6 11.4 13.6 Z"/><rect x="12.4" y="31.4" width="7.2" height="14.6" rx="3.5"/><path d="M40.6 15 Q46.2 15.6 46.2 20.6 Q46.2 25.6 40.6 26.6 Z"/></g><path d="M20 16.2 L30.2 20.8 L20 25.6 L23.4 20.8 Z" fill="#787de2"/></svg>
</body></html>
